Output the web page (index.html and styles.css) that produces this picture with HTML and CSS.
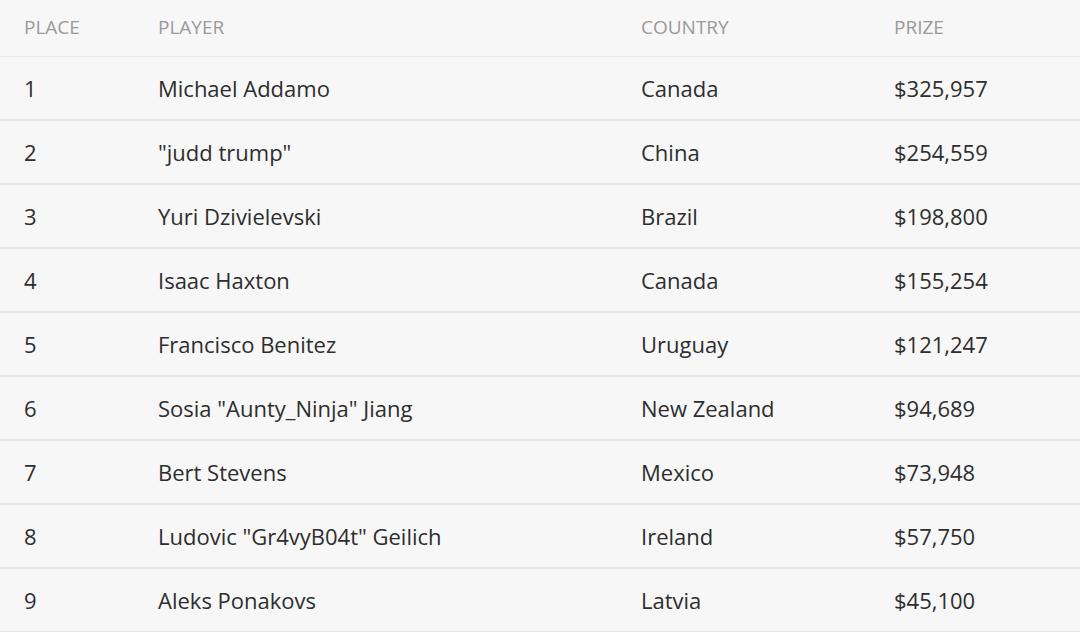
FILE: index.html
```html
<!DOCTYPE html>
<html>
<head>
<meta charset="utf-8">
<link rel="stylesheet" href="styles.css">
</head>
<body>
<div class="table">
  <div class="row head">
    <div class="cell">PLACE</div>
    <div class="cell">PLAYER</div>
    <div class="cell">COUNTRY</div>
    <div class="cell">PRIZE</div>
  </div>
  <div class="row"><div class="cell">1</div><div class="cell">Michael Addamo</div><div class="cell">Canada</div><div class="cell">$325,957</div></div>
  <div class="row"><div class="cell">2</div><div class="cell">"judd trump"</div><div class="cell">China</div><div class="cell">$254,559</div></div>
  <div class="row"><div class="cell">3</div><div class="cell">Yuri Dzivielevski</div><div class="cell">Brazil</div><div class="cell">$198,800</div></div>
  <div class="row"><div class="cell">4</div><div class="cell">Isaac Haxton</div><div class="cell">Canada</div><div class="cell">$155,254</div></div>
  <div class="row"><div class="cell">5</div><div class="cell">Francisco Benitez</div><div class="cell">Uruguay</div><div class="cell">$121,247</div></div>
  <div class="row"><div class="cell">6</div><div class="cell">Sosia "Aunty_Ninja" Jiang</div><div class="cell">New Zealand</div><div class="cell">$94,689</div></div>
  <div class="row"><div class="cell">7</div><div class="cell">Bert Stevens</div><div class="cell">Mexico</div><div class="cell">$73,948</div></div>
  <div class="row"><div class="cell">8</div><div class="cell">Ludovic "Gr4vyB04t" Geilich</div><div class="cell">Ireland</div><div class="cell">$57,750</div></div>
  <div class="row"><div class="cell">9</div><div class="cell">Aleks Ponakovs</div><div class="cell">Latvia</div><div class="cell">$45,100</div></div>
</div>
</body>
</html>
```
FILE: styles.css
```css
html, body {
  margin: 0;
  padding: 0;
  background: #f7f7f7;
}
body {
  font-family: "Open Sans", "Liberation Sans", sans-serif;
  color: #2e2e2e;
  overflow: hidden;
}
.table {
  display: flex;
  flex-direction: column;
}
.row {
  display: grid;
  grid-template-columns: 134px 483px 253px 1fr;
  height: 62px;
  align-items: center;
  border-bottom: 2px solid #e6e6e6;
  font-size: 22px;
}
.row.head {
  height: 54px;
  padding-bottom: 2px;
  border-bottom: 1px solid #e9e9e9;
  font-size: 19px;
  color: #9a9a9a;
}
.cell {
  padding-left: 24px;
  white-space: nowrap;
}
```
